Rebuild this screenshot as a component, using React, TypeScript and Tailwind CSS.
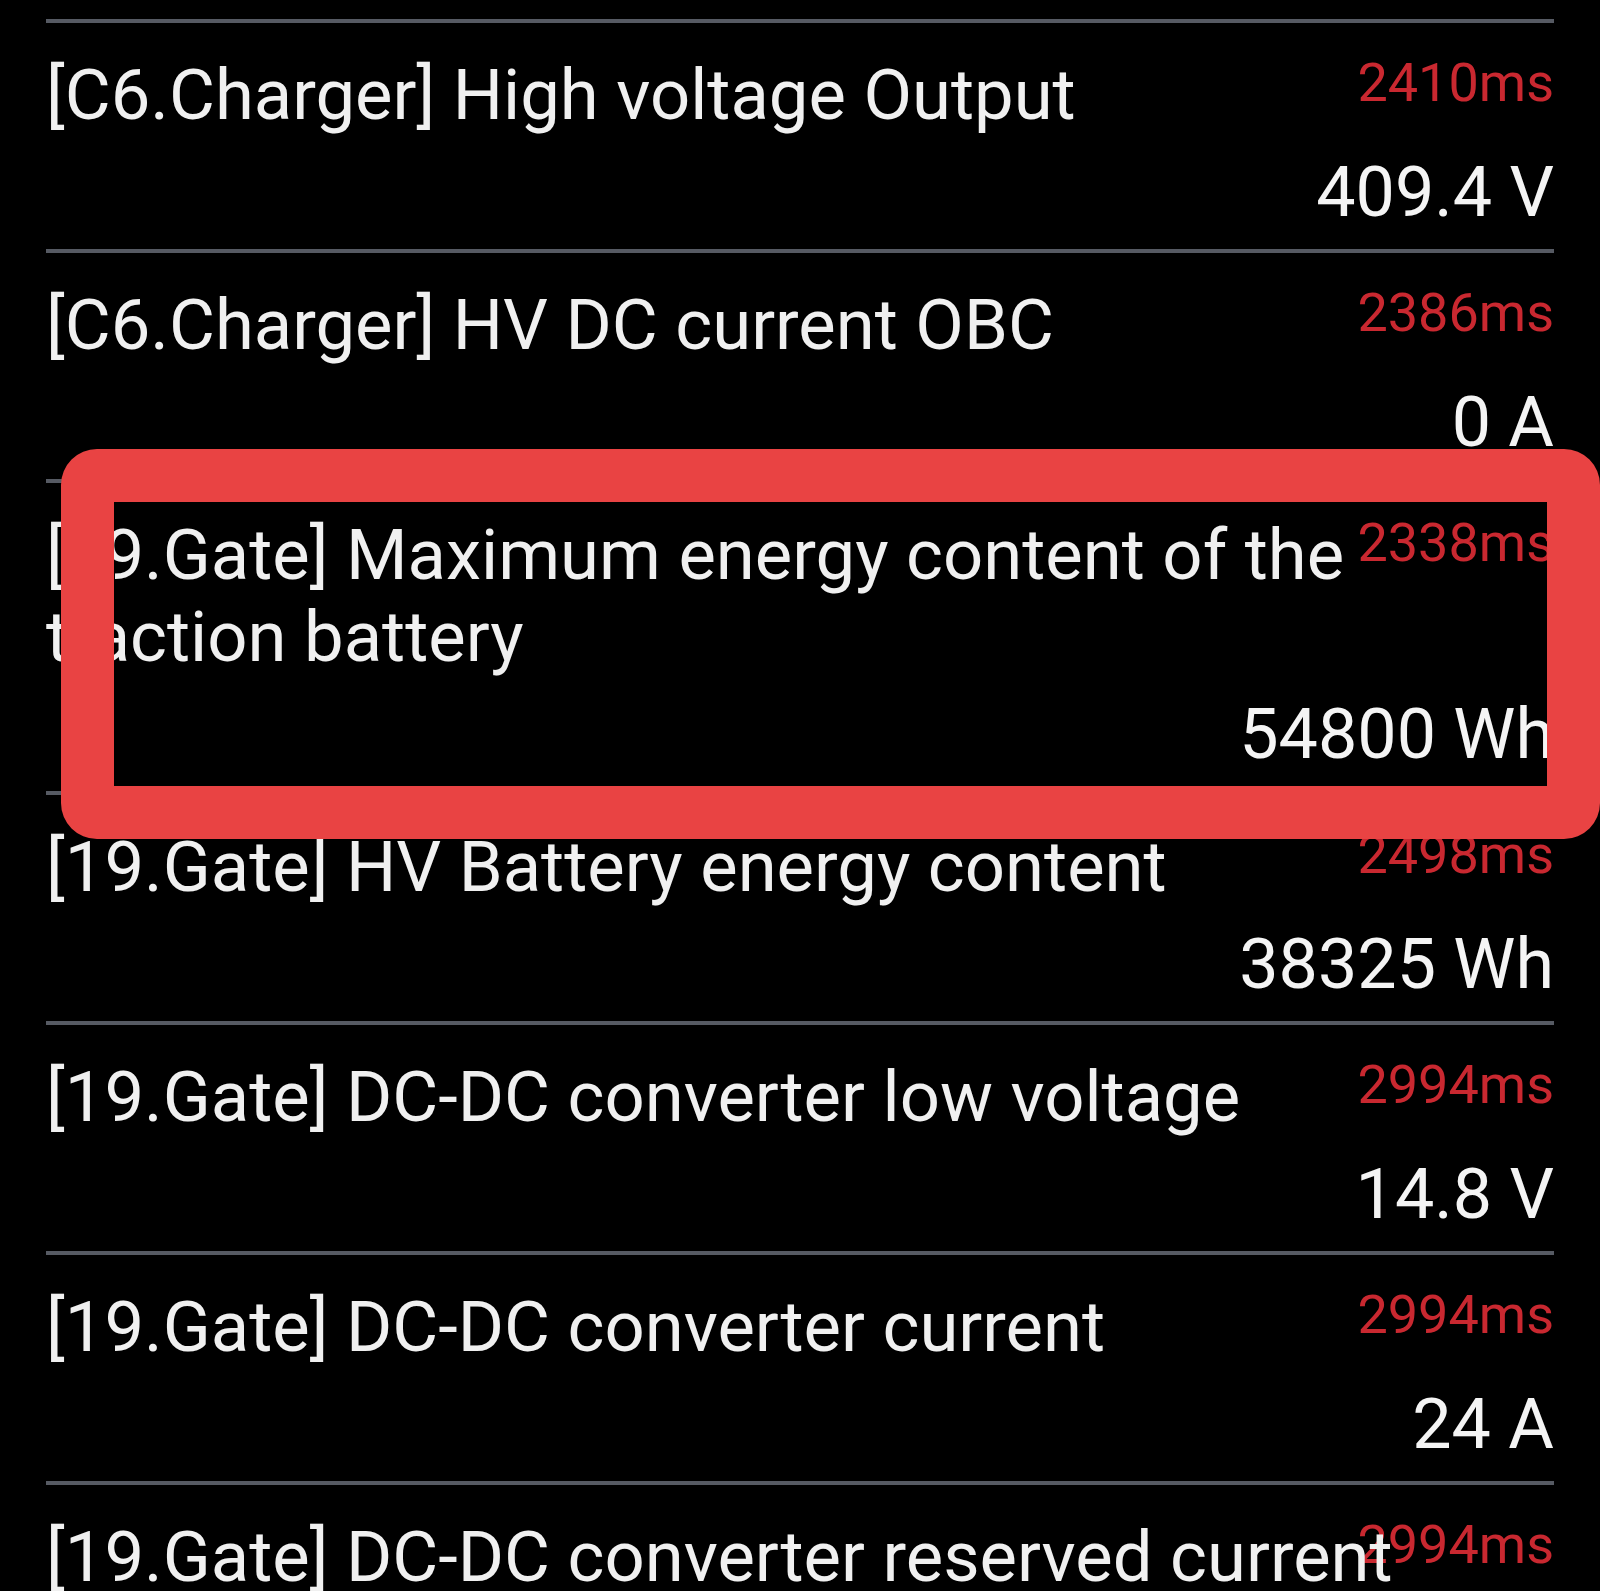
import React from "react";

type Reading = {
  name: string;
  ms: string;
  value: string;
};

const readings: Reading[] = [
  { name: "[C6.Charger] High voltage Output", ms: "2410ms", value: "409.4 V" },
  { name: "[C6.Charger] HV DC current OBC", ms: "2386ms", value: "0 A" },
  {
    name: "[19.Gate] Maximum energy content of the traction battery",
    ms: "2338ms",
    value: "54800 Wh",
  },
  { name: "[19.Gate] HV Battery energy content", ms: "2498ms", value: "38325 Wh" },
  { name: "[19.Gate] DC-DC converter low voltage", ms: "2994ms", value: "14.8 V" },
  { name: "[19.Gate] DC-DC converter current", ms: "2994ms", value: "24 A" },
  { name: "[19.Gate] DC-DC converter reserved current", ms: "2994ms", value: "" },
];

function ReadingRow({ reading }: { reading: Reading }) {
  return (
    <div className="relative border-t-4 border-[#565a63] pt-[31px] pb-[16px]">
      {/* czas odświeżenia w prawym górnym rogu */}
      <div className="absolute right-0 top-[28px] text-[54px] leading-[63px] text-[#c92830]">
        {reading.ms}
      </div>
      <div className="relative text-[70.6px] leading-[82px] text-[#f0f0f0]">
        {reading.name}
      </div>
      <div className="mt-[15px] h-[82px] text-right text-[70px] leading-[82px] text-[#f4f4f4]">
        {reading.value}
      </div>
    </div>
  );
}

export default function App() {
  return (
    <div className="relative h-[1591px] w-[1600px] overflow-hidden bg-black font-['Roboto',sans-serif]">
      <div className="px-[46px] pt-[19px]">
        {readings.map((reading, i) => (
          <ReadingRow key={i} reading={reading} />
        ))}
      </div>

      {/* czerwona ramka zaznaczenia */}
      <div className="pointer-events-none absolute left-[61px] top-[449px] h-[390px] w-[1539px] rounded-[36px] border-[53px] border-[#e94343]" />
    </div>
  );
}
